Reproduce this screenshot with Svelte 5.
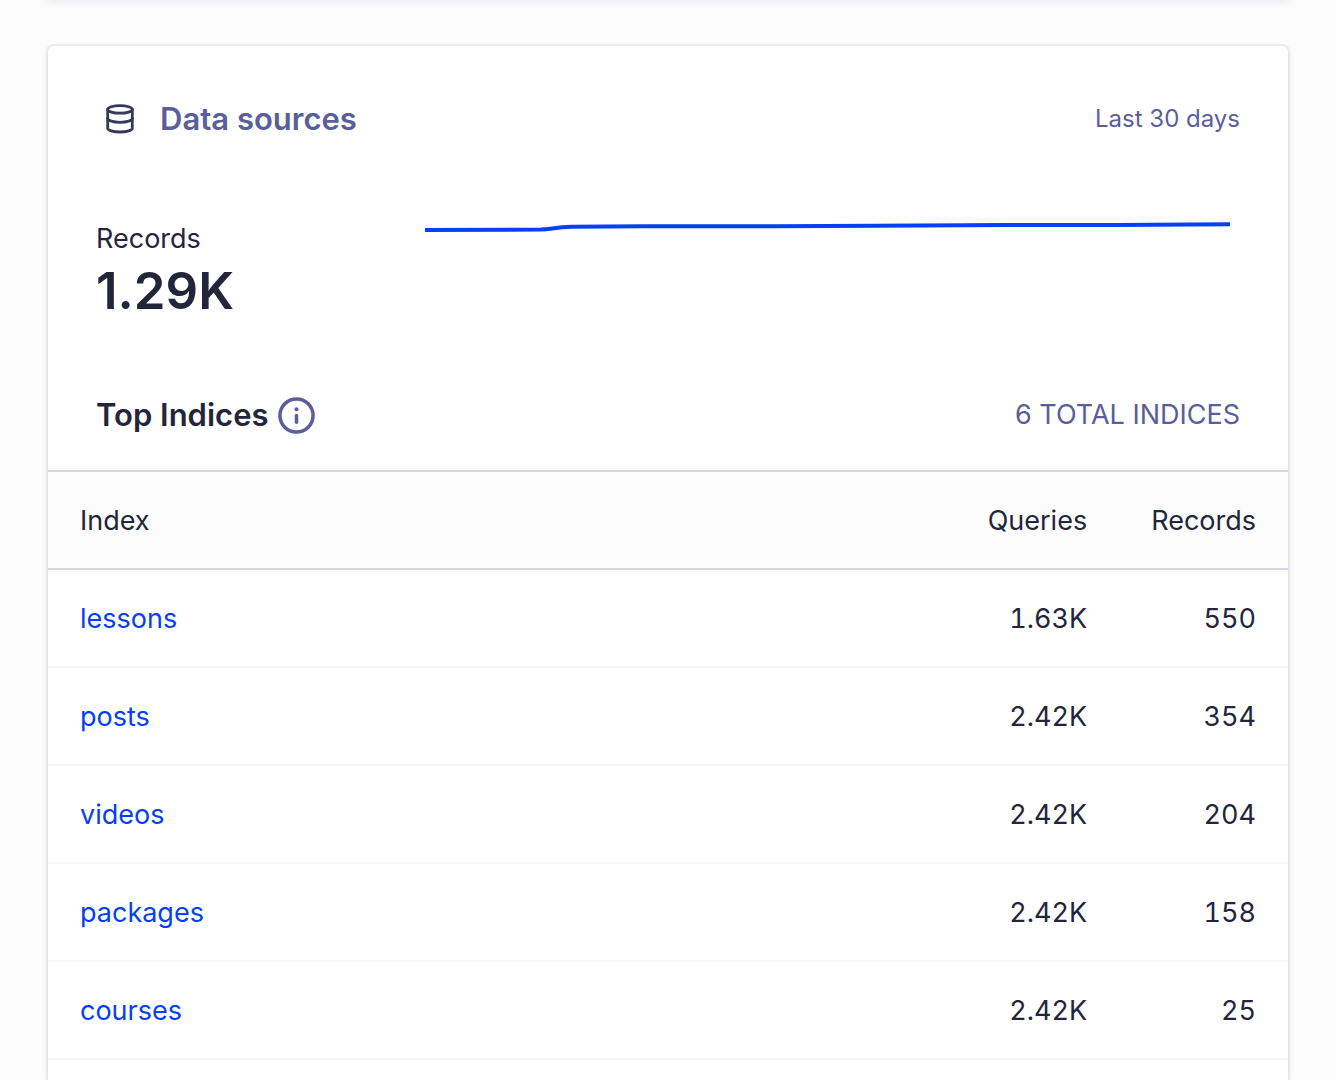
<script>
    const indices = [
        { name: "lessons", queries: "1.63K", records: 550 },
        { name: "posts", queries: "2.42K", records: 354 },
        { name: "videos", queries: "2.42K", records: 204 },
        { name: "packages", queries: "2.42K", records: 158 },
        { name: "courses", queries: "2.42K", records: 25 }
    ];
</script>

<div class="page">
    <div class="card previous"></div>

    <section class="card">
        <header class="card-header">
            <svg class="database-icon" viewBox="0 0 32 32" aria-hidden="true">
                <ellipse cx="16" cy="6.4" rx="12.3" ry="3.8" />
                <path d="M3.7 6.4v18.8c0 2.1 5.5 3.8 12.3 3.8s12.3-1.7 12.3-3.8V6.4" />
                <path d="M3.7 15.5c0 2.1 5.5 3.8 12.3 3.8s12.3-1.7 12.3-3.8" />
            </svg>
            <h2>Data sources</h2>
            <span class="period">Last 30 days</span>
        </header>

        <div class="summary">
            <div class="metric">
                <div class="metric-label">Records</div>
                <div class="metric-value">1.29K</div>
            </div>
            <svg class="sparkline" viewBox="0 0 804 40" preserveAspectRatio="none" aria-hidden="true">
                <path d="M0 20L116 19.6C126 19 132 17 146 16.8L218 16.3L348 16.2L450 15.8L580 15L690 15L804 14.3" />
            </svg>
        </div>

        <div class="table-title">
            <h3>Top Indices</h3>
            <button class="info" aria-label="About top indices">
                <svg viewBox="0 0 38 38" aria-hidden="true">
                    <circle cx="19" cy="19" r="17" />
                    <circle class="dot" cx="19" cy="12.5" r="2.1" />
                    <path d="M19 19v7" />
                </svg>
            </button>
            <span class="total">6 TOTAL INDICES</span>
        </div>

        <table>
            <thead>
                <tr>
                    <th scope="col">Index</th>
                    <th scope="col" class="number">Queries</th>
                    <th scope="col" class="number">Records</th>
                </tr>
            </thead>
            <tbody>
                {#each indices as index}
                    <tr>
                        <td><a href="#{index.name}">{index.name}</a></td>
                        <td class="number">{index.queries}</td>
                        <td class="number">{index.records}</td>
                    </tr>
                {/each}
            </tbody>
        </table>
    </section>
</div>

<style>
    :global(body) {
        background: #fcfcfd;
    }

    .page {
        display: flex;
        flex-direction: column;
        gap: 46px;
        box-sizing: border-box;
        height: 100vh;
        padding: 0 48px;
        overflow: hidden;
        color: #23263b;
        font-family: Inter, "Liberation Sans", sans-serif;
        font-size: 27px;
        line-height: 40px;
    }

    .card {
        flex: 1 0 auto;
        border-radius: 6px 6px 0 0;
        background: #fff;
        box-shadow: 0 0 0 2px rgba(35, 38, 59, 0.06), 0 2px 6px rgba(35, 38, 59, 0.1);
    }

    .previous {
        flex: none;
        height: 0;
        border-radius: 0;
        box-shadow: 0 0 6px 1px rgba(35, 38, 59, 0.2);
    }

    .card-header {
        display: flex;
        align-items: center;
        padding: 48px 48px 0 56px;
        height: 50px;
    }

    .database-icon {
        width: 32px;
        height: 32px;
        margin-right: 24px;
        fill: none;
        stroke: #36395a;
        stroke-width: 2.8;
        stroke-linecap: round;
    }

    h2,
    h3 {
        margin: 0;
        font-size: 31px;
        font-weight: 600;
    }

    h2 {
        color: #5a5e9a;
    }

    .period {
        margin-left: auto;
        color: #5a5e9a;
        font-size: 24px;
    }

    .summary {
        display: flex;
        justify-content: space-between;
        padding: 66px 58px 0 48px;
    }

    .metric {
        padding-top: 9px;
    }

    .metric-value {
        font-size: 51px;
        font-weight: 600;
        line-height: 64px;
    }

    .sparkline {
        width: 71%;
        height: 40px;
        fill: none;
        stroke: #0540f5;
        stroke-width: 4;
    }

    .table-title {
        display: flex;
        align-items: center;
        padding: 72px 48px 35px;
    }

    .info {
        width: 37px;
        height: 37px;
        margin-left: 9px;
        padding: 0;
        border: none;
        background: none;
        cursor: pointer;
    }

    .info svg {
        display: block;
        fill: none;
        stroke: #5a5e9a;
        stroke-width: 3.6;
        stroke-linecap: round;
    }

    .info .dot {
        fill: #5a5e9a;
        stroke: none;
    }

    .total {
        margin-left: auto;
        color: #5a5e9a;
    }

    table {
        width: 100%;
        border-spacing: 0;
        font-variant-numeric: tabular-nums;
    }

    th,
    td {
        height: 94px;
        padding: 2px 32px 0;
        border-bottom: 2px solid #f5f5fa;
        font-weight: 400;
        text-align: left;
    }

    th {
        border-top: 2px solid #d6d6e7;
        border-bottom-color: #d6d6e7;
        background: #fcfcfd;
    }

    .number {
        width: 1px;
        text-align: right;
    }

    a {
        color: #0540f5;
        text-decoration: none;
    }
</style>
